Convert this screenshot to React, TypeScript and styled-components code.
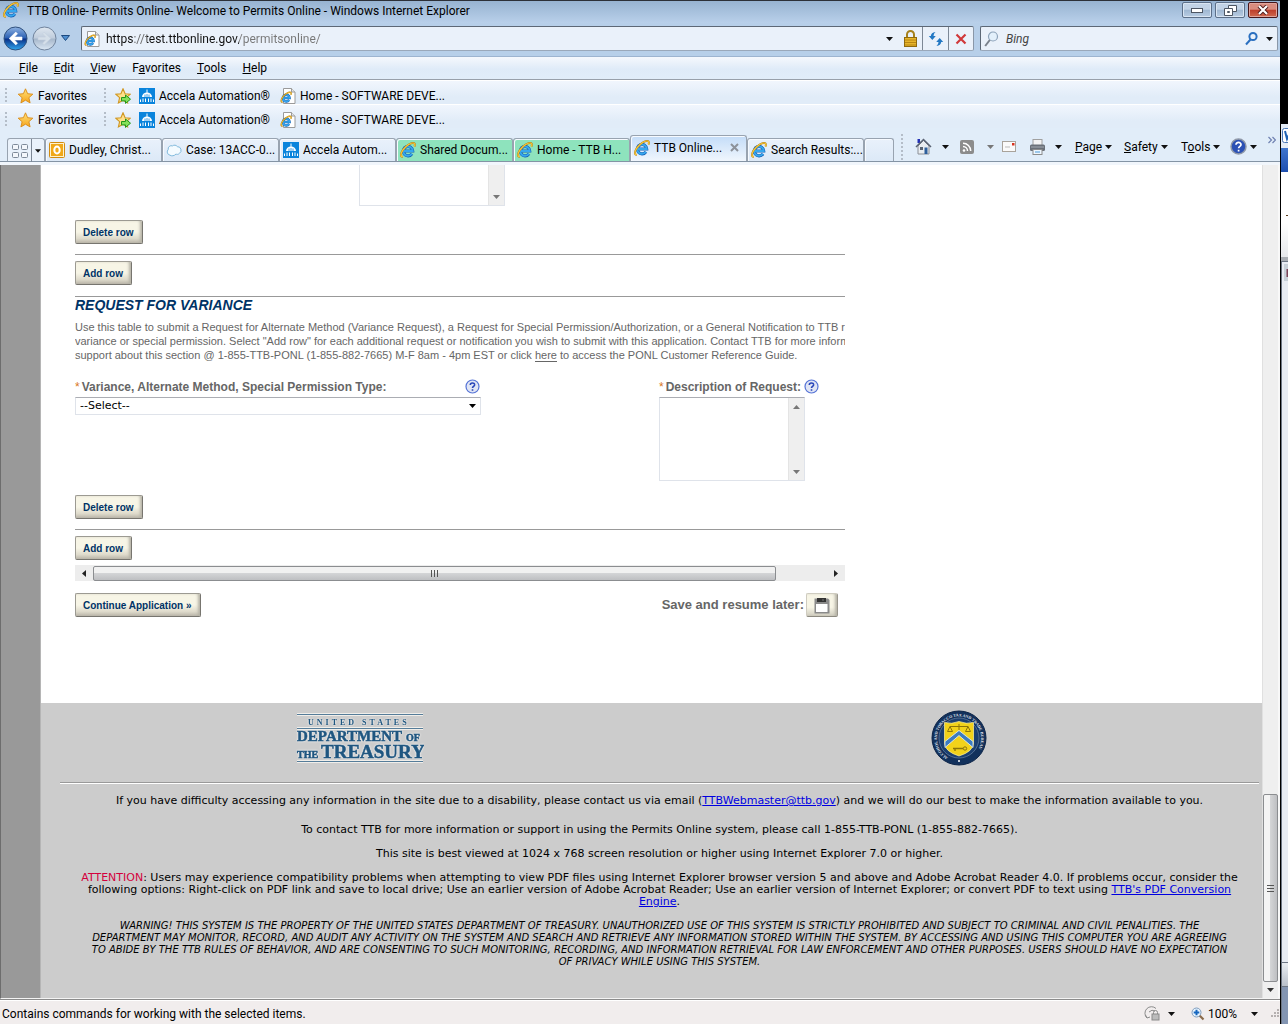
import React from "react";
import styled, { createGlobalStyle, css } from "styled-components";

const UI = `Roboto, "Open Sans", sans-serif`;
const ARIAL = `"Liberation Sans", Arial, sans-serif`;
const VERDANA = `"DejaVu Sans", Verdana, sans-serif`;

const Global = createGlobalStyle`
  *, *::before, *::after { box-sizing: border-box; }
  html, body, #root { height: 100%; }
  body { margin: 0; background: #000; font: 12px/16px ${UI}; color: #000; overflow: hidden; }
  button, input, select, textarea { font: inherit; color: inherit; margin: 0; }
  svg { display: block; flex: none; }
`;

/* ---------- shell ---------- */

const Desktop = styled.div`
  display: flex;
  height: 100vh;
`;

const Browser = styled.div`
  flex: 1;
  min-width: 0;
  display: flex;
  flex-direction: column;
  background: #b7cfe9;
`;

const PlainButton = styled.button`
  appearance: none;
  border: 0;
  padding: 0;
  background: none;
  display: flex;
  align-items: center;
  justify-content: center;
  flex: none;
  white-space: nowrap;
`;

/* ---------- title bar ---------- */

const TitleBar = styled.header`
  display: flex;
  align-items: flex-start;
  height: 23px;
  border-top: 1px solid #2c3038;
  background: linear-gradient(#97b3d1, #b9d0ea);
  padding: 1px 2px 0 3px;
  gap: 8px;
`;

const Title = styled.h1`
  flex: 1;
  margin: 0;
  font-size: 12px;
  line-height: 18px;
  font-weight: 400;
`;

const Captions = styled.div`
  display: flex;
  gap: 3px;
`;

const Caption = styled(PlainButton)<{ $close?: boolean }>`
  width: 30px;
  height: 16px;
  border: 1px solid ${(p) => (p.$close ? "#47161a" : "#5c6f88")};
  border-radius: 2px;
  box-shadow: inset 0 0 0 1px ${(p) => (p.$close ? "#e0a59c" : "#d9e5f2")};
  background: ${(p) =>
    p.$close
      ? "linear-gradient(#d98c7e 0 45%, #bd3d2a 50%, #cf6a50)"
      : "linear-gradient(#c2d3e6 0 45%, #9fb7d1 50%, #b9cde3)"};
`;

/* ---------- navigation row ---------- */

const NavRow = styled.div`
  display: flex;
  align-items: flex-start;
  height: 34px;
  padding: 3px 2px 0 3px;
  border-bottom: 1px solid #9db4d0;
`;

const Rounds = styled.div`
  display: flex;
  align-items: center;
  width: 78px;
  height: 24px;
  gap: 4px;
`;

const Field = styled.div<{ $grow?: boolean }>`
  display: flex;
  align-items: center;
  height: 25px;
  border: 1px solid #5d6876;
  border-bottom-color: #9aa8ba;
  border-right-color: #8a97a8;
  border-radius: 2px;
  background: #eaf1fa;
  ${(p) => (p.$grow ? "flex: 1; min-width: 0;" : "width: 298px; margin-left: 6px;")}
`;

const UrlInput = styled.input`
  flex: 1;
  min-width: 0;
  height: 22px;
  border: 0;
  padding: 0;
  outline: 0;
  margin-left: 4px;
  color: transparent;
  background: linear-gradient(90deg, #111 0 28px, #666 28px 41px, #111 41px 133px, #777 133px);
  background-clip: text;
  -webkit-background-clip: text;
`;

const SearchInput = styled.input`
  flex: 1;
  min-width: 0;
  height: 22px;
  border: 0;
  padding: 0;
  margin-left: 5px;
  outline: 0;
  background: none;
  &::placeholder {
    color: #444;
    opacity: 1;
    font-style: italic;
  }
`;

const FieldButton = styled(PlainButton)<{ $w: number; $line?: boolean }>`
  width: ${(p) => p.$w}px;
  height: 23px;
  ${(p) => p.$line && "border-left: 1px solid #7d8896;"}
`;

/* ---------- menu and favourites ---------- */

const MenuBar = styled.nav`
  display: flex;
  align-items: center;
  height: 23px;
  padding-left: 11px;
  background: linear-gradient(#f5f8fd, #dfebf8 55%, #e1edf9);
  border-bottom: 1px solid #98a0aa;
`;

const MenuButton = styled(PlainButton)`
  padding: 0 8px;
  height: 22px;
`;

const FavRow = styled.div`
  display: flex;
  align-items: center;
  height: 24px;
  padding: 7px 0 0 5px;
  background: linear-gradient(#fff 0 1px, #f1f6fd 1px, #e1ecf8 70%);
`;

const Grip = styled.span<{ $h: number }>`
  flex: none;
  width: 2px;
  height: ${(p) => p.$h}px;
  background: repeating-linear-gradient(#b4bdc8 0 2px, transparent 2px 4px);
`;

const FavLink = styled.a<{ $w?: number }>`
  display: flex;
  align-items: center;
  gap: 4px;
  flex: none;
  width: ${(p) => (p.$w ? p.$w + "px" : "auto")};
  color: #000;
  text-decoration: none;
  white-space: nowrap;
`;

const AddFavorite = styled(PlainButton)`
  width: 33px;
`;

const FavStart = styled.div`
  display: flex;
  align-items: center;
  width: 97px;
  padding-left: 10px;
`;

/* ---------- tabs ---------- */

const TabRow = styled.div`
  display: flex;
  align-items: flex-end;
  height: 34px;
  background: #e1edf9;
  border-bottom: 1px solid #8494a5;
  padding-left: 7px;
`;

const TabStrip = styled.div`
  display: flex;
  align-items: flex-end;
  flex: 1;
  min-width: 0;
`;

const edge = css`
  border: 1px solid #98a3b0;
  border-bottom: 0;
  border-radius: 3px 3px 0 0;
`;

const QuickTabs = styled.div`
  display: flex;
  ${edge}
  width: 38px;
  height: 23px;
  background: #eaf2fb;
`;

const Tab = styled(PlainButton)<{ $bg?: string; $active?: boolean; $w?: number }>`
  ${edge}
  justify-content: flex-start;
  gap: 4px;
  width: ${(p) => p.$w ?? 117}px;
  height: ${(p) => (p.$active ? 26 : 23)}px;
  padding-left: 3px;
  padding-bottom: ${(p) => (p.$active ? 2 : 0)}px;
  box-shadow: inset 1px 1px 0 #f6faff;
  background: ${(p) => (p.$active ? "linear-gradient(#c3dcf8, #f0f6fd)" : p.$bg ?? "linear-gradient(#e9f1fb, #dce9f7)")};
`;

const TabText = styled.span`
  flex: 1;
  text-align: left;
`;

const CommandBar = styled.div`
  display: flex;
  align-items: center;
  width: 379px;
  height: 29px;
  align-self: flex-end;
`;

const Command = styled(PlainButton)<{ $w: number }>`
  width: ${(p) => p.$w}px;
  height: 26px;
  gap: 3px;
  justify-content: flex-start;
`;

const TabShade = styled.div`
  height: 3px;
  background: #f1f6fc;
`;

/* ---------- viewport ---------- */

const Viewport = styled.main`
  flex: 1;
  min-height: 0;
  display: flex;
  border-left: 1px solid #6d6d6d;
  border-bottom: 1px solid #f4f4f4;
  background: #fff;
`;

const Margin = styled.div`
  width: 40px;
  flex: none;
  background: #999;
  border-right: 1px solid #b5b5b5;
`;

const Page = styled.div`
  flex: 1;
  min-width: 0;
  display: flex;
  flex-direction: column;
  background: #fff;
`;

const Form = styled.form`
  flex: none;
  width: 770px;
  margin: 0 0 86px 34px;
  font-family: ${ARIAL};
  color: #666;
`;

const ScrollArea = styled.div`
  overflow: hidden;
  white-space: nowrap;
`;

const Clip = styled.div`
  display: flex;
  align-items: flex-end;
  height: 41px;
  margin-left: 284px;
  overflow: hidden;
`;

const AreaBox = styled.div`
  display: flex;
  width: 146px;
  height: 84px;
  border: 1px solid #dfe3ea;
  border-top-color: #abadb3;
`;

const Area = styled.textarea`
  flex: 1;
  min-width: 0;
  border: 0;
  outline: 0;
  resize: none;
  overflow: hidden;
`;

const AreaScroll = styled.div`
  display: flex;
  flex-direction: column;
  justify-content: space-between;
  align-items: center;
  width: 16px;
  padding: 7px 0 6px;
  background: #efefef;
  border-left: 1px solid #e4e4e4;
`;

const Section = styled.div`
  padding: 14px 0 10px;
  border-bottom: 1px solid #999;
`;

const AddSection = styled.div<{ $line?: boolean }>`
  padding: 6px 0 ${(p) => (p.$line ? 11 : 5)}px;
  ${(p) => p.$line && "border-bottom: 1px solid #999;"}
`;

const FormButton = styled.button`
  display: block;
  height: 24px;
  padding: 1px 8px 0 7px;
  border: 1px solid #9c9a92;
  border-right-color: #77756f;
  border-bottom-color: #77756f;
  border-radius: 2px;
  background: linear-gradient(#f7f5e6 0 50%, #dedacb 80%, #b9b5a9);
  box-shadow: inset -3px 0 3px -1px #b5b2a6;
  font: bold 10px/21px ${ARIAL};
  color: #003366;
`;

const Heading = styled.h2`
  margin: 0;
  font: italic bold 14px/16px ${ARIAL};
  color: #003366;
`;

const Intro = styled.p`
  margin: 7px 0 16px;
  font-size: 11px;
  line-height: 14px;
`;

const HereLink = styled.a`
  color: #666;
  text-decoration: none;
  border-bottom: 1px solid #666;
`;

const FieldRow = styled.div`
  display: flex;
  align-items: flex-start;
`;

const FieldCol = styled.div<{ $w: number; $gap?: number }>`
  width: ${(p) => p.$w}px;
  margin-right: ${(p) => p.$gap ?? 0}px;
`;

const LabelRow = styled.div<{ $spread?: boolean }>`
  display: flex;
  align-items: center;
  justify-content: ${(p) => (p.$spread ? "space-between" : "flex-start")};
  gap: 3px;
  height: 19px;
  padding: 0 1px 2px 0;
`;

const Label = styled.label`
  font: bold 12px/16px ${ARIAL};
`;

const Star = styled.span`
  color: #d9761c;
  font-weight: 400;
  margin-right: 2px;
`;

const SelectBox = styled.div`
  display: flex;
  align-items: center;
  height: 18px;
  border: 1px solid #dfe3ea;
  border-top-color: #abadb3;
  padding-right: 4px;
`;

const Select = styled.select`
  flex: 1;
  appearance: none;
  border: 0;
  outline: 0;
  height: 16px;
  padding: 0 4px;
  background: none;
  font: 11px/16px ${VERDANA};
  color: #000;
`;

const HScroll = styled.div`
  display: flex;
  align-items: center;
  height: 16px;
  background: #ededed;
`;

const HTrack = styled.div`
  flex: 1;
  height: 15px;
`;

const HThumb = styled.div`
  display: flex;
  align-items: center;
  justify-content: center;
  width: 93%;
  height: 100%;
  border: 1px solid #8b8d90;
  border-radius: 2px;
  background: linear-gradient(#f1f1f1 0 45%, #d3d4d6 50%, #bebfc2);
`;

const ScrollButton = styled(PlainButton)<{ $w: number }>`
  width: ${(p) => p.$w}px;
  height: 16px;
`;

const Actions = styled.div`
  display: flex;
  align-items: center;
  justify-content: space-between;
  padding: 12px 7px 0 0;
`;

const SaveGroup = styled.div`
  display: flex;
  align-items: center;
  gap: 2px;
  font: bold 13px/16px ${ARIAL};
`;

const SaveButton = styled(FormButton)`
  width: 32px;
  display: flex;
  align-items: center;
  justify-content: center;
  border-color: #cfccc0 #99968c #8c897f #cfccc0;
  background: linear-gradient(#f7f5e6 0 60%, #cfccbe);
`;

/* ---------- footer ---------- */

const Footer = styled.footer`
  flex: 1;
  background: #ccc;
  padding: 7px 3px 0 19px;
  font: 11px/12px ${VERDANA};
  text-align: center;
`;

const Logos = styled.div`
  display: flex;
  align-items: flex-start;
  height: 72px;
`;

const LogoCell = styled.div`
  width: 50%;
  height: 56px;
  display: flex;
  align-items: center;
  justify-content: center;
`;

const Rule = styled.hr`
  margin: 0 0 11px;
  border: 0;
  height: 2px;
  background: linear-gradient(#999 0 1px, #fff 1px);
`;

const Note = styled.p<{ $after: number }>`
  margin: 0 0 ${(p) => p.$after}px;
  padding: 0 2px;
  a {
    color: #0000e0;
  }
`;

const Warning = styled.p`
  margin: 0;
  font-size: 10px;
  font-style: italic;
`;

const Attention = styled.span`
  color: #d4003c;
`;

const VScroll = styled.div`
  display: flex;
  flex-direction: column;
  align-items: center;
  justify-content: flex-end;
  width: 18px;
  flex: none;
  background: #efefef;
  border-left: 1px solid #e0e0e0;
  border-right: 2px solid #f8f8f8;
`;

const VThumb = styled.div`
  display: flex;
  align-items: center;
  justify-content: center;
  width: 15px;
  height: 188px;
  border: 1px solid #8b8d90;
  border-radius: 2px;
  background: linear-gradient(90deg, #f4f4f4 0 45%, #d3d4d6 50%, #bebfc2);
`;

const StatusBar = styled.div`
  display: flex;
  align-items: center;
  height: 25px;
  border-top: 1px solid #8b8b8b;
  box-shadow: inset 0 1px 0 #fff;
  background: #f1eded;
  padding: 3px 0 0 2px;
`;

const StatusText = styled.span`
  flex: 1;
`;

/* ---------- window behind ---------- */

const Behind = styled.aside`
  width: 8px;
  flex: none;
  display: flex;
  flex-direction: column;
  overflow: hidden;
  background: #000;
  border-left: 1px solid #000;
`;

const Slab = styled.div<{ $h?: number; $bg: string; $line?: boolean }>`
  ${(p) => (p.$h ? `height: ${p.$h}px; flex: none;` : "flex: 1;")}
  background: ${(p) => p.$bg};
  overflow: hidden;
  ${(p) => p.$line && "border-left: 1px solid #6d7684; border-top: 1px solid #6d7684;"}
`;

/* ---------- drawings ---------- */

const IeShape = () => (
  <g fill="none">
    <path d="M4 9H12.700A4.700 4.700 0 1 0 11.900 11.800" stroke="#1560b4" strokeWidth="3.200" />
    <path d="M4 9H12.700A4.700 4.700 0 1 0 11.900 11.800" stroke="#35a7ee" strokeWidth="2" />
    <path d="M2.800 14.700C.3 15 .4 11.500 3 7.800 6 3.500 11.500.2 14 1.200c1.200.5 1 2 .4 3.300" stroke="#b07a10" strokeWidth="1.900" />
    <path d="M2.800 14.700C.3 15 .4 11.500 3 7.800 6 3.500 11.500.2 14 1.200c1.200.5 1 2 .4 3.300" stroke="#f8c93a" strokeWidth="1.200" />
  </g>
);

const Ie = ({ s = 16 }: { s?: number }) => (
  <svg width={s} height={s} viewBox="0 0 16 16"><IeShape /></svg>
);

const IePage = () => (
  <svg width="16" height="16" viewBox="0 0 16 16">
    <path d="M3.500.5h8l3.500 3.500v11.500H3.500z" fill="#fff" stroke="#9a9a9a" />
    <path d="M11.500.5V4H15" fill="#e6e6e6" stroke="#9a9a9a" />
    <g transform="translate(.5 3.500) scale(.72)"><IeShape /></g>
  </svg>
);

const Down = ({ c = "#111", w = 7 }: { c?: string; w?: number }) => (
  <svg width={w} height="4" viewBox="0 0 7 4"><path d="M0 0h7L3.500 4z" fill={c} /></svg>
);

const Up = () => (
  <svg width="7" height="4" viewBox="0 0 7 4"><path d="M0 4h7L3.500 0z" fill="#777" /></svg>
);

const Back = () => (
  <svg width="25" height="25" viewBox="0 0 25 25">
    <defs>
      <linearGradient id="bk" x1="0" y1="0" x2="0" y2="1">
        <stop offset="0" stopColor="#8fb3e2" />
        <stop offset=".48" stopColor="#2b60b4" />
        <stop offset=".52" stopColor="#0a2f86" />
        <stop offset="1" stopColor="#32a8f0" />
      </linearGradient>
    </defs>
    <circle cx="12.500" cy="12.500" r="11.500" fill="url(#bk)" stroke="#31517d" />
    <path d="M19 11H11.500l3-3.200-1.700-1.700-6.600 6.400 6.600 6.400 1.700-1.700-3-3.200H19z" fill="#fff" stroke="#fff" strokeWidth=".6" />
  </svg>
);

const Forward = () => (
  <svg width="25" height="25" viewBox="0 0 25 25">
    <defs>
      <linearGradient id="fw" x1="0" y1="0" x2="0" y2="1">
        <stop offset="0" stopColor="#dfe7f0" />
        <stop offset=".48" stopColor="#c0cddd" />
        <stop offset=".52" stopColor="#a6b7cb" />
        <stop offset="1" stopColor="#dce8f4" />
      </linearGradient>
    </defs>
    <circle cx="12.500" cy="12.500" r="11.500" fill="url(#fw)" stroke="#6f829c" />
    <path d="M6 11h7.500l-3-3.200 1.700-1.700 6.600 6.400-6.600 6.400-1.700-1.700 3-3.200H6z" fill="#d5dfe9" stroke="#c2cfdd" strokeWidth=".6" />
  </svg>
);

const STAR = "M8 .8l2.100 4.900 5.200.5-3.900 3.500 1.200 5.200L8 12.200l-4.600 2.700 1.200-5.200L.7 6.200l5.200-.5z";

const FavStar = () => (
  <svg width="17" height="16" viewBox="0 0 16 16">
    <defs>
      <linearGradient id="st" x1="0" y1="0" x2="0" y2="1">
        <stop offset="0" stopColor="#ffe27a" />
        <stop offset="1" stopColor="#f6a41c" />
      </linearGradient>
    </defs>
    <path d={STAR} fill="url(#st)" stroke="#d98a13" strokeWidth=".9" />
  </svg>
);

const AddStar = () => (
  <svg width="16" height="16" viewBox="0 0 16 16">
    <path d={STAR} fill="#ffe08a" stroke="#cf9620" strokeWidth="1.100" />
    <path d="M6.500 9.500h4V7l5 4.200-5 4.200v-2.500h-4z" fill="#86e05a" stroke="#23961a" />
  </svg>
);

const Accela = () => (
  <svg width="16" height="16" viewBox="0 0 16 16">
    <rect width="16" height="16" fill="#0a84dc" />
    <path d="M3 9a5 4.500 0 0 1 10 0z" fill="#fff" />
    <path d="M8 1.500v4" stroke="#fff" />
    <path d="M6 9V6.500M8 9V6M10 9V6.500" stroke="#0a84dc" strokeWidth=".8" />
    <path d="M1.500 14V11.500M4 14v-3.500M6.500 14v-3.500M9.500 14v-3.500M12 14v-3.500M14.500 14v-2.500" stroke="#fff" />
  </svg>
);

const QuickGrid = () => (
  <svg width="16" height="14" viewBox="0 0 16 14" fill="#f4f7fb" stroke="#7e8a99">
    <rect x=".5" y=".5" width="6" height="5" rx="1" /><rect x="9.500" y=".5" width="6" height="5" rx="1" />
    <rect x=".5" y="8.500" width="6" height="5" rx="1" /><rect x="9.500" y="8.500" width="6" height="5" rx="1" />
  </svg>
);

const Outlook = () => (
  <svg width="16" height="16" viewBox="0 0 16 16">
    <rect x=".5" y=".5" width="15" height="15" rx="1" fill="#fff2cc" stroke="#d18b10" />
    <rect x="2" y="2" width="12" height="12" fill="#f0a818" />
    <ellipse cx="8" cy="8" rx="2.700" ry="3.500" fill="none" stroke="#fff" strokeWidth="2" />
  </svg>
);

const Cloud = () => (
  <svg width="16" height="16" viewBox="0 0 16 16">
    <path d="M4 13.200A3.400 3.400 0 0 1 2.200 7.500 3.200 3.200 0 0 1 6.500 3.900 3.300 3.300 0 0 1 11.300 4.600 3.700 3.700 0 0 1 13.400 11.400C12.300 12.700 10.700 12.500 10 12 8.500 14 5.300 14.300 4 13.200z" fill="#f4fbff" stroke="#7fb9dc" />
  </svg>
);

const Lock = () => (
  <svg width="15" height="17" viewBox="0 0 15 17">
    <path d="M4 8V4.500a3.500 3.500 0 0 1 7 0V8" fill="none" stroke="#a6811c" strokeWidth="2" />
    <rect x="1.500" y="7.500" width="12" height="9" fill="#e7b52c" stroke="#8f6a0f" />
    <path d="M2 10h11M2 12.500h11M2 15h11" stroke="#b98613" />
  </svg>
);

const Refresh = () => (
  <svg width="16" height="16" viewBox="0 0 16 16" fill="#2378c3">
    <path d="M.8 5h2q.3-3.500 4.700-4Q5.500 2.500 5.500 5h2.300L4.300 9z" />
    <path d="M15.200 11h-2q-.3 3.500-4.700 4 2-1.500 2-4H8.200l3.500-4z" />
  </svg>
);

const Stop = () => (
  <svg width="12" height="12" viewBox="0 0 12 12"><path d="M1.500 1.500l9 9M10.500 1.500l-9 9" stroke="#d0383a" strokeWidth="2.200" /></svg>
);

const Lens = ({ flip, c }: { flip?: boolean; c: string }) => (
  <svg width="15" height="16" viewBox="0 0 15 16">
    <circle cx="9" cy="5.500" r={flip ? 3.600 : 4.500} fill={flip ? "none" : "#e3f0fb"} stroke={c} strokeWidth={flip ? 2 : 1.200} />
    <path d={flip ? "M6.500 8.500L2 13.500" : "M5.800 9L1.200 15"} stroke={flip ? c : "#7a828c"} strokeWidth="2" />
  </svg>
);

const Home = () => (
  <svg width="17" height="17" viewBox="0 0 17 17">
    <path d="M2.500 1h2.500v4H2.500z" fill="#2330b4" />
    <path d="M3 8l5.500-5.500L14 8v8H3z" fill="#e9edf1" stroke="#8b8f96" />
    <path d="M1 9l7.500-7.500L16 9" fill="none" stroke="#596273" strokeWidth="1.500" />
    <rect x="9.500" y="9.500" width="3" height="6.500" fill="#2d5f9c" /><rect x="5" y="9" width="3" height="3" fill="#5a6472" />
  </svg>
);

const Rss = () => (
  <svg width="14" height="14" viewBox="0 0 14 14">
    <rect width="14" height="14" rx="2" fill="#8c8c8c" />
    <circle cx="4" cy="10.500" r="1.300" fill="#fff" />
    <path d="M3 6.500a4.500 4.500 0 0 1 4.500 4.500M3 3.300A7.700 7.700 0 0 1 10.700 11" fill="none" stroke="#fff" strokeWidth="1.500" />
  </svg>
);

const Mail = () => (
  <svg width="14" height="11" viewBox="0 0 14 11">
    <rect x=".5" y=".5" width="13" height="10" fill="#fafafa" stroke="#a9a39b" />
    <rect x="10" y="2" width="2.500" height="2.500" fill="#d8321f" /><path d="M3 6h5" stroke="#bbb" />
  </svg>
);

const Printer = () => (
  <svg width="17" height="16" viewBox="0 0 17 16">
    <rect x="4" y=".5" width="9" height="6" fill="#f4f4f4" stroke="#a0a0a0" />
    <rect x="1" y="5.500" width="15" height="6.500" rx="1.500" fill="#6a7078" />
    <path d="M2 8h13" stroke="#a5abb3" />
    <rect x="4" y="10.500" width="9" height="5" fill="#eef7ff" stroke="#8b8b8b" /><path d="M6 13h5" stroke="#4a98d6" />
  </svg>
);

const HelpBall = () => (
  <svg width="17" height="17" viewBox="0 0 17 17">
    <circle cx="8.500" cy="8.500" r="7.500" fill="#2b51b5" stroke="#8f98a8" strokeWidth="1.500" />
    <path d="M6 6.800C6 3.600 11.200 3.800 11 6.700 10.900 8.400 8.600 8.400 8.600 10.300M8.600 11.800v1.600" fill="none" stroke="#fff" strokeWidth="1.700" />
  </svg>
);

const HelpMark = () => (
  <svg width="15" height="15" viewBox="0 0 15 15">
    <circle cx="7.500" cy="7.500" r="6.500" fill="#e0e5f4" stroke="#5573d6" strokeWidth="1.200" />
    <path d="M5.300 6C5.300 3.200 9.700 3.300 9.600 5.900 9.500 7.400 7.500 7.300 7.500 9M7.500 10.300v1.500" fill="none" stroke="#2744b8" strokeWidth="1.600" />
  </svg>
);

const Floppy = () => (
  <svg width="16" height="16" viewBox="0 0 16 16">
    <path d="M.5.500h13.500l1.500 1.500v13.500H.5z" fill="#8a8a8a" />
    <rect x="3" y="0" width="9" height="4" fill="#333" /><rect x="8" y="1" width="2" height="2" fill="#555" />
    <rect x="2" y="6" width="11.500" height="8" fill="#fff" />
  </svg>
);

const Halo = styled.g`
  filter: drop-shadow(0 0 1px #fff);
`;

const Treasury = () => (
  <svg width="128" height="52" viewBox="0 0 128 52" fontFamily='"Liberation Serif", serif' fontWeight="bold" fill="#1f5680">
    <path d="M1 2.500h126M1 16.500h126M1 49.500h126" stroke="#f0eeea" strokeWidth="3" />
    <path d="M1 2.500h126M1 16.500h126M1 49.500h126" stroke="#557c99" />
    <Halo stroke="#1f5680" strokeWidth=".5">
      <text x="12" y="13" fontSize="8" letterSpacing="3" strokeWidth="0">UNITED STATES</text>
      <text x="1" y="29" fontSize="15">DEPARTMENT</text>
      <text x="110" y="29" fontSize="10">OF</text>
      <text x="1" y="46" fontSize="10">THE</text>
      <text x="25" y="46" fontSize="19">TREASURY</text>
    </Halo>
  </svg>
);

const Seal = () => (
  <svg width="56" height="56" viewBox="0 0 56 56">
    <defs>
      <path id="ring" d="M17 47.500A22 22 0 1 1 39 47.500" />
    </defs>
    <circle cx="28" cy="28" r="27" fill="#12315c" stroke="#0b2347" />
    <circle cx="28" cy="28" r="20" fill="#1b3f70" stroke="#5f7a9c" strokeWidth=".8" />
    <text fontSize="4" fontFamily='"Liberation Serif", serif' fill="#e4e9f0" fontWeight="bold">
      <textPath href="#ring">ALCOHOL AND TOBACCO TAX AND TRADE BUREAU</textPath>
    </text>
    <path d="M13.500 12.500q7 2 14.500-1 7.500 3 14.500 1v20q0 9-14.500 13.500-14.500-4.500-14.500-13.500z" fill="#f2d21a" stroke="#fff3a0" strokeWidth=".7" />
    <path d="M14 37.500l14-12 14 12v-6L28 20.500 14 31.500z" fill="#3d7cc0" stroke="#e9f1fa" strokeWidth=".8" />
    <path d="M19 16.500h18M28 14v6M19 16.500l-2.500 5h5zM37 16.500l-2.500 5h5z" fill="none" stroke="#8c7408" />
    <path d="M22 38.500h10M24 38.500v2.500" stroke="#8c7408" strokeWidth="1.300" /><circle cx="34" cy="38.500" r="1.700" fill="none" stroke="#8c7408" />
    <circle cx="28" cy="51" r="1" fill="#fff" />
  </svg>
);

const BlockedEye = () => (
  <svg width="17" height="16" viewBox="0 0 17 16" fill="none" stroke="#8a8a8a">
    <path d="M3 12A6 6 0 0 1 12 2.500M3 12l-1.500-3M3 12l3-1" /><rect x="8" y="8" width="7" height="6" fill="#bbb" /><path d="M9.500 8V6.500a2 2 0 0 1 4 0V8M5 6q3-3 6-1" />
  </svg>
);

const Zoom = () => (
  <svg width="14" height="14" viewBox="0 0 14 14">
    <path d="M8.500 8.500l4 4" stroke="#8a6a4a" strokeWidth="2.200" /><circle cx="5.500" cy="5.500" r="4.500" fill="#e9f4fd" stroke="#7e9cbd" />
    <path d="M5.500 2.700v5.600M2.700 5.500h5.600" stroke="#1767c0" strokeWidth="2" />
  </svg>
);

const SizeGrip = () => (
  <svg width="9" height="9" viewBox="0 0 9 9" fill="#b5b0b0">
    <path d="M6 0h2v2H6zM3 3h2v2H3zM6 3h2v2H6zM0 6h2v2H0zM3 6h2v2H3zM6 6h2v2H6z" />
  </svg>
);

/* ---------- pieces ---------- */

const menus: [string, string, string][] = [
  ["", "F", "ile"], ["", "E", "dit"], ["", "V", "iew"], ["F", "a", "vorites"], ["", "T", "ools"], ["", "H", "elp"],
];

const Favourites = () => (
  <FavRow>
    <Grip $h={16} />
    <FavStart>
      <FavLink href="#favorites"><FavStar />Favorites</FavLink>
    </FavStart>
    <Grip $h={16} />
    <AddFavorite aria-label="Add to favorites"><AddStar /></AddFavorite>
    <FavLink href="#accela" $w={141}><Accela />Accela Automation®</FavLink>
    <FavLink href="#home"><IePage />Home - SOFTWARE DEVE...</FavLink>
  </FavRow>
);

const GREEN = "#8ee3bd";
const tabs = [
  { icon: <Outlook />, text: "Dudley, Christ..." },
  { icon: <Cloud />, text: "Case: 13ACC-0..." },
  { icon: <Accela />, text: "Accela Autom..." },
  { icon: <Ie />, text: "Shared Docum...", bg: GREEN },
  { icon: <Ie />, text: "Home - TTB H...", bg: GREEN },
  { icon: <Ie />, text: "TTB Online...", active: true },
  { icon: <Ie />, text: "Search Results:..." },
];

const ScrollingArea = ({ id, label }: { id: string; label?: string }) => (
  <AreaBox>
    <Area id={id} aria-label={label} />
    <AreaScroll><Up /><Down c="#777" /></AreaScroll>
  </AreaBox>
);

export default function App() {
  return (
    <>
      <Global />
      <Desktop>
        <Browser>
          <TitleBar>
            <Ie />
            <Title>TTB Online- Permits Online- Welcome to Permits Online - Windows Internet Explorer</Title>
            <Captions>
              <Caption aria-label="Minimize">
                <svg width="12" height="5" viewBox="0 0 12 5"><rect x=".5" y=".5" width="11" height="4" fill="#fff" stroke="#4d5663" /></svg>
              </Caption>
              <Caption aria-label="Restore">
                <svg width="13" height="11" viewBox="0 0 13 11" fill="#fff" stroke="#4d5663"><path d="M4.500.5h8v6h-8z" /><path d="M.5 3.500h8v7h-8z" /><path d="M3.500 6.500h2v1h-2z" /></svg>
              </Caption>
              <Caption aria-label="Close" $close>
                <svg width="12" height="10" viewBox="0 0 12 10"><path d="M2 1l8 8M10 1L2 9" stroke="#4d1a1a" strokeWidth="4" /><path d="M2 1l8 8M10 1L2 9" stroke="#fff" strokeWidth="2.200" /></svg>
              </Caption>
            </Captions>
          </TitleBar>

          <NavRow>
            <Rounds>
              <PlainButton aria-label="Back"><Back /></PlainButton>
              <PlainButton aria-label="Forward"><Forward /></PlainButton>
              <PlainButton aria-label="Recent pages">
                <svg width="9" height="6" viewBox="0 0 9 6"><path d="M.5.500h8L4.500 5.500z" fill="#4f8fd0" stroke="#1d4a80" /></svg>
              </PlainButton>
            </Rounds>
            <Field $grow>
              <FieldButton $w={20} aria-label="Site"><IePage /></FieldButton>
              <UrlInput aria-label="Address" defaultValue="https://test.ttbonline.gov/permitsonline/" />
              <FieldButton $w={18} aria-label="Show addresses"><Down /></FieldButton>
              <FieldButton $w={24} aria-label="Security report"><Lock /></FieldButton>
              <FieldButton $w={26} $line aria-label="Refresh"><Refresh /></FieldButton>
              <FieldButton $w={25} $line aria-label="Stop"><Stop /></FieldButton>
            </Field>
            <Field>
              <FieldButton $w={20} aria-label="Search provider"><Lens c="#8ea3ba" /></FieldButton>
              <SearchInput aria-label="Search" placeholder="Bing" />
              <FieldButton $w={22} aria-label="Search now"><Lens flip c="#2a6fc0" /></FieldButton>
              <FieldButton $w={15} aria-label="Search options"><Down /></FieldButton>
            </Field>
          </NavRow>

          <MenuBar>
            {menus.map(([a, key, b]) => (
              <MenuButton key={key + b}><span>{a}<u>{key}</u>{b}</span></MenuButton>
            ))}
          </MenuBar>

          <Favourites />
          <Favourites />

          <TabRow>
            <TabStrip>
              <QuickTabs>
                <FieldButton $w={23} aria-label="Quick tabs"><QuickGrid /></FieldButton>
                <FieldButton $w={13} $line aria-label="Tab list"><Down w={6} /></FieldButton>
              </QuickTabs>
              {tabs.map((t) => (
                <Tab key={t.text} $bg={t.bg} $active={t.active}>
                  {t.icon}
                  <TabText>{t.text}</TabText>
                  {t.active && (
                    <svg width="16" height="9" viewBox="0 0 16 9"><path d="M1 1l7 7M8 1L1 8" stroke="#8d929a" strokeWidth="2" /></svg>
                  )}
                </Tab>
              ))}
              <Tab $w={30} aria-label="New tab" />
            </TabStrip>
            <CommandBar>
              <Command as="span" $w={14}><Grip $h={26} /></Command>
              <Command $w={27} aria-label="Home"><Home /></Command>
              <Command $w={18} aria-label="Home options"><Down /></Command>
              <Command $w={27} aria-label="Feeds"><Rss /></Command>
              <Command $w={15} aria-label="Feed options"><Down c="#777" /></Command>
              <Command $w={27} aria-label="Read mail"><Mail /></Command>
              <Command $w={26} aria-label="Print"><Printer /></Command>
              <Command $w={20} aria-label="Print options"><Down /></Command>
              <Command $w={49}><span><u>P</u>age</span><Down /></Command>
              <Command $w={57}><span><u>S</u>afety</span><Down /></Command>
              <Command $w={49}><span>T<u>o</u>ols</span><Down /></Command>
              <Command $w={38} aria-label="Help"><HelpBall /><Down /></Command>
              <Command $w={10} aria-label="More commands">
                <svg width="8" height="22" viewBox="0 0 8 22"><path d="M.5 1l3 3-3 3M4.500 1l3 3-3 3" fill="none" stroke="#6d7fb0" strokeWidth="1.200" /></svg>
              </Command>
            </CommandBar>
          </TabRow>
          <TabShade />

          <Viewport>
            <Margin />
            <Page>
              <Form onSubmit={(e) => e.preventDefault()}>
                <ScrollArea>
                  <Clip><ScrollingArea id="prev" label="Previous description" /></Clip>
                  <Section><FormButton type="button">Delete row</FormButton></Section>
                  <AddSection $line><FormButton type="button">Add row</FormButton></AddSection>
                  <Heading>REQUEST FOR VARIANCE</Heading>
                  <Intro>
                    Use this table to submit a Request for Alternate Method (Variance Request), a Request for Special Permission/Authorization, or a General Notification to TTB related to a<br />
                    variance or special permission. Select "Add row" for each additional request or notification you wish to submit with this application. Contact TTB for more information or<br />
                    support about this section @ 1-855-TTB-PONL (1-855-882-7665) M-F 8am - 4pm EST or click <HereLink href="#guide">here</HereLink> to access the PONL Customer Reference Guide.
                  </Intro>
                  <FieldRow>
                    <FieldCol $w={406} $gap={178}>
                      <LabelRow $spread>
                        <Label htmlFor="type"><Star>*</Star>Variance, Alternate Method, Special Permission Type:</Label>
                        <PlainButton type="button" aria-label="Help on type"><HelpMark /></PlainButton>
                      </LabelRow>
                      <SelectBox>
                        <Select id="type"><option>--Select--</option></Select>
                        <Down c="#000" />
                      </SelectBox>
                    </FieldCol>
                    <FieldCol $w={180}>
                      <LabelRow>
                        <Label htmlFor="desc"><Star>*</Star>Description of Request:</Label>
                        <PlainButton type="button" aria-label="Help on description"><HelpMark /></PlainButton>
                      </LabelRow>
                      <ScrollingArea id="desc" />
                    </FieldCol>
                  </FieldRow>
                  <Section><FormButton type="button">Delete row</FormButton></Section>
                  <AddSection><FormButton type="button">Add row</FormButton></AddSection>
                </ScrollArea>
                <HScroll>
                  <ScrollButton type="button" $w={18} aria-label="Scroll left">
                    <svg width="4" height="7" viewBox="0 0 4 7"><path d="M4 0v7L0 3.500z" fill="#222" /></svg>
                  </ScrollButton>
                  <HTrack>
                    <HThumb>
                      <svg width="9" height="7" viewBox="0 0 9 7"><path d="M1.500 0v7M4.500 0v7M7.500 0v7" stroke="#555" /></svg>
                    </HThumb>
                  </HTrack>
                  <ScrollButton type="button" $w={18} aria-label="Scroll right">
                    <svg width="4" height="7" viewBox="0 0 4 7"><path d="M0 0v7l4-3.500z" fill="#222" /></svg>
                  </ScrollButton>
                </HScroll>
                <Actions>
                  <FormButton type="submit">Continue Application »</FormButton>
                  <SaveGroup>
                    <label htmlFor="save">Save and resume later:</label>
                    <SaveButton id="save" type="button"><Floppy /></SaveButton>
                  </SaveGroup>
                </Actions>
              </Form>

              <Footer>
                <Logos>
                  <LogoCell><Treasury /></LogoCell>
                  <LogoCell><Seal /></LogoCell>
                </Logos>
                <Rule />
                <Note $after={17}>
                  If you have difficulty accessing any information in the site due to a disability, please contact us via email (<a href="#mail">TTBWebmaster@ttb.gov</a>) and we will do our best to make the information available to you.
                </Note>
                <Note $after={12}>To contact TTB for more information or support in using the Permits Online system, please call 1-855-TTB-PONL (1-855-882-7665).</Note>
                <Note $after={12}>This site is best viewed at 1024 x 768 screen resolution or higher using Internet Explorer 7.0 or higher.</Note>
                <Note $after={12}>
                  <Attention>ATTENTION</Attention>: Users may experience compatibility problems when attempting to view PDF files using Internet Explorer browser version 5 and above and Adobe Acrobat Reader 4.0. If problems occur, consider the following options: Right-click on PDF link and save to local drive; Use an earlier version of Adobe Acrobat Reader; Use an earlier version of Internet Explorer; or convert PDF to text using <a href="#pdf">TTB's PDF Conversion<br />Engine</a>.
                </Note>
                <Warning>
                  WARNING! THIS SYSTEM IS THE PROPERTY OF THE UNITED STATES DEPARTMENT OF TREASURY. UNAUTHORIZED USE OF THIS SYSTEM IS STRICTLY PROHIBITED AND SUBJECT TO CRIMINAL AND CIVIL PENALITIES. THE<br />
                  DEPARTMENT MAY MONITOR, RECORD, AND AUDIT ANY ACTIVITY ON THE SYSTEM AND SEARCH AND RETRIEVE ANY INFORMATION STORED WITHIN THE SYSTEM. BY ACCESSING AND USING THIS COMPUTER YOU ARE AGREEING<br />
                  TO ABIDE BY THE TTB RULES OF BEHAVIOR, AND ARE CONSENTING TO SUCH MONITORING, RECORDING, AND INFORMATION RETRIEVAL FOR LAW ENFORCEMENT AND OTHER PURPOSES. USERS SHOULD HAVE NO EXPECTATION<br />
                  OF PRIVACY WHILE USING THIS SYSTEM.
                </Warning>
              </Footer>
            </Page>
            <VScroll>
              <VThumb>
                <svg width="7" height="9" viewBox="0 0 7 9"><path d="M0 1.500h7M0 4.500h7M0 7.500h7" stroke="#555" /></svg>
              </VThumb>
              <ScrollButton $w={15} aria-label="Scroll down"><Down c="#333" /></ScrollButton>
            </VScroll>
          </Viewport>

          <StatusBar>
            <StatusText>Contains commands for working with the selected items.</StatusText>
            <Command $w={24} aria-label="Privacy report"><BlockedEye /></Command>
            <Command $w={23} aria-label="Privacy options"><Down /></Command>
            <Command $w={60}><Zoom />100%</Command>
            <Command $w={20} aria-label="Zoom options"><Down /></Command>
            <SizeGrip />
          </StatusBar>
        </Browser>

        <Behind>
          <Slab $h={124} $bg="#000" />
          <Slab $h={24} $bg="#e4ecf6">
            <svg width="12" height="22" viewBox="0 0 12 22"><rect x="1.500" y="4.500" width="14" height="14" rx="2" fill="#fff" stroke="#4c78b8" /><path d="M4 7l2 8 3-7" fill="none" stroke="#1f62b5" strokeWidth="2" /></svg>
          </Slab>
          <Slab $h={24} $bg="linear-gradient(#3f74cc, #1e4fb0)" />
          <Slab $h={85} $bg="linear-gradient(#fff 60%, #e6e8eb)">
            <svg width="8" height="60" viewBox="0 0 8 60"><path d="M5 43.500h3" stroke="#5a3a1a" /></svg>
          </Slab>
          <Slab $h={4} $bg="#a9adb3" />
          <Slab $bg="#e8ecf3" $line>
            <svg width="8" height="20" viewBox="0 0 8 20"><rect x="2" y="2" width="6" height="17" fill="#c8d0d8" /><path d="M5.500 7v8" stroke="#7a4358" strokeWidth="2" /></svg>
          </Slab>
          <Slab $h={24} $bg="linear-gradient(#e9edf2, #b9c0ca)" $line />
          <Slab $h={38} $bg="#8395b2" $line />
        </Behind>
      </Desktop>
    </>
  );
}
